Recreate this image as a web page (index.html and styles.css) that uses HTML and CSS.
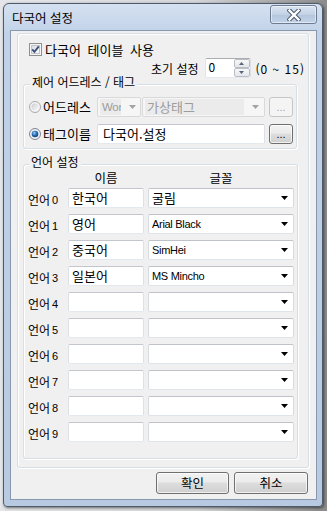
FILE: index.html
```html
<!DOCTYPE html>
<html lang="ko">
<head>
<meta charset="utf-8">
<title>다국어 설정</title>
<link rel="stylesheet" href="styles.css">
</head>
<body>
<div class="window">
  <div class="titlebar">
    <span class="title">다국어 설정</span>
    <div class="close">
      <svg width="14" height="12" viewBox="0 0 14 12"><path d="M2.5 1.5 L11.5 10.5 M11.5 1.5 L2.5 10.5" stroke="#4c5a6d" stroke-width="4.4" stroke-linecap="square" fill="none"/><path d="M2.5 1.5 L11.5 10.5 M11.5 1.5 L2.5 10.5" stroke="#ffffff" stroke-width="2.4" stroke-linecap="square" fill="none"/></svg>
    </div>
  </div>
  <div class="client">
    <div class="panel">
      <div class="check-row">
        <svg class="checkbox" width="13" height="13" viewBox="0 0 13 13">
          <defs><linearGradient id="cbg" x1="0" y1="0" x2="1" y2="1"><stop offset="0" stop-color="#d8dbe0"/><stop offset="1" stop-color="#fbfbfb"/></linearGradient></defs>
          <rect x="0.5" y="0.5" width="12" height="12" fill="#f6f6f6" stroke="#8e8f8f"/>
          <rect x="2.5" y="2.5" width="8" height="8" fill="url(#cbg)" stroke="#c1c5cb"/>
          <path d="M3.2 6.4 L5.4 8.9 L9.8 3.4" stroke="#3d4f78" stroke-width="1.8" fill="none"/>
        </svg>
        <span class="check-label">다국어 테이블 사용</span>
      </div>
      <div class="init-row">
        <span>초기 설정</span>
        <div class="spin">
          <span class="spin-value">0</span>
          <div class="spin-btns">
            <span class="spin-btn"><svg width="5" height="3" viewBox="0 0 5 3"><path d="M0 3h5L2.5 0z" fill="#55657d"/></svg></span>
            <span class="spin-btn"><svg width="5" height="3" viewBox="0 0 5 3"><path d="M0 0h5L2.5 3z" fill="#55657d"/></svg></span>
          </div>
        </div>
        <span class="range">(0 ~ 15)</span>
      </div>
      <fieldset class="group group-addr">
        <legend>제어 어드레스 / 태그</legend>
        <div class="addr-row">
          <svg class="radio" width="12" height="12" viewBox="0 0 12 12">
            <defs><linearGradient id="rg1" x1="0" y1="0" x2="1" y2="1"><stop offset="0" stop-color="#c9cbcf"/><stop offset="1" stop-color="#fbfbfb"/></linearGradient></defs>
            <circle cx="6" cy="6" r="5.5" fill="#f4f4f4" stroke="#a9a9a9"/>
            <circle cx="6" cy="6" r="3.6" fill="url(#rg1)"/>
          </svg>
          <span class="radio-label">어드레스</span>
          <div class="combo disabled combo-type"><span class="combo-text latin">Wor</span><svg width="7" height="4" viewBox="0 0 7 4"><path d="M0 0h7L3.5 4z" fill="#a3a3a3"/></svg></div>
          <div class="combo disabled combo-tag"><span class="combo-text">가상태그</span><svg width="7" height="4" viewBox="0 0 7 4"><path d="M0 0h7L3.5 4z" fill="#a3a3a3"/></svg></div>
          <button class="dots disabled" type="button">...</button>
        </div>
        <div class="addr-row">
          <svg class="radio" width="12" height="12" viewBox="0 0 12 12">
            <defs><radialGradient id="rg2" cx="0.4" cy="0.35" r="0.7"><stop offset="0" stop-color="#9fd0f5"/><stop offset="0.5" stop-color="#2a6fb6"/><stop offset="1" stop-color="#123d73"/></radialGradient></defs>
            <circle cx="6" cy="6" r="5.5" fill="#eef0f3" stroke="#7d8691"/>
            <circle cx="6" cy="6" r="3.3" fill="url(#rg2)"/>
          </svg>
          <span class="radio-label">태그이름</span>
          <div class="textbox tag-input">다국어.설정</div>
          <button class="dots" type="button">...</button>
        </div>
      </fieldset>
      <fieldset class="group group-lang">
        <legend>언어 설정</legend>
        <div class="lang-head"><span></span><span>이름</span><span>글꼴</span></div>
        <div class="lang-grid">
          <span class="lang-label">언어 <span class="num">0</span></span>
          <div class="textbox name">한국어</div>
          <div class="combo font"><span class="combo-text">굴림</span><svg width="7" height="4" viewBox="0 0 7 4"><path d="M0 0h7L3.5 4z" fill="#000"/></svg></div>

          <span class="lang-label">언어 <span class="num">1</span></span>
          <div class="textbox name">영어</div>
          <div class="combo font"><span class="combo-text latin">Arial Black</span><svg width="7" height="4" viewBox="0 0 7 4"><path d="M0 0h7L3.5 4z" fill="#000"/></svg></div>

          <span class="lang-label">언어 <span class="num">2</span></span>
          <div class="textbox name">중국어</div>
          <div class="combo font"><span class="combo-text latin">SimHei</span><svg width="7" height="4" viewBox="0 0 7 4"><path d="M0 0h7L3.5 4z" fill="#000"/></svg></div>

          <span class="lang-label">언어 <span class="num">3</span></span>
          <div class="textbox name">일본어</div>
          <div class="combo font"><span class="combo-text latin">MS Mincho</span><svg width="7" height="4" viewBox="0 0 7 4"><path d="M0 0h7L3.5 4z" fill="#000"/></svg></div>

          <span class="lang-label">언어 <span class="num">4</span></span>
          <div class="textbox name"></div>
          <div class="combo font"><span class="combo-text"></span><svg width="7" height="4" viewBox="0 0 7 4"><path d="M0 0h7L3.5 4z" fill="#000"/></svg></div>

          <span class="lang-label">언어 <span class="num">5</span></span>
          <div class="textbox name"></div>
          <div class="combo font"><span class="combo-text"></span><svg width="7" height="4" viewBox="0 0 7 4"><path d="M0 0h7L3.5 4z" fill="#000"/></svg></div>

          <span class="lang-label">언어 <span class="num">6</span></span>
          <div class="textbox name"></div>
          <div class="combo font"><span class="combo-text"></span><svg width="7" height="4" viewBox="0 0 7 4"><path d="M0 0h7L3.5 4z" fill="#000"/></svg></div>

          <span class="lang-label">언어 <span class="num">7</span></span>
          <div class="textbox name"></div>
          <div class="combo font"><span class="combo-text"></span><svg width="7" height="4" viewBox="0 0 7 4"><path d="M0 0h7L3.5 4z" fill="#000"/></svg></div>

          <span class="lang-label">언어 <span class="num">8</span></span>
          <div class="textbox name"></div>
          <div class="combo font"><span class="combo-text"></span><svg width="7" height="4" viewBox="0 0 7 4"><path d="M0 0h7L3.5 4z" fill="#000"/></svg></div>

          <span class="lang-label">언어 <span class="num">9</span></span>
          <div class="textbox name"></div>
          <div class="combo font"><span class="combo-text"></span><svg width="7" height="4" viewBox="0 0 7 4"><path d="M0 0h7L3.5 4z" fill="#000"/></svg></div>
        </div>
      </fieldset>
    </div>
    <div class="buttons">
      <button class="btn ok" type="button">확인</button>
      <button class="btn cancel" type="button">취소</button>
    </div>
  </div>
</div>
</body>
</html>
```

FILE: styles.css
```css
* { box-sizing: border-box; }
html, body { margin: 0; }
body {
  width: 327px;
  height: 511px;
  overflow: hidden;
  padding: 3px 0 0 3px;
  background: linear-gradient(90deg, #e4e6e9 0, #d4d6d9 60%, #8c8c8c 100%);
  font-family: "Noto Sans CJK KR", "Noto Sans", sans-serif;
  font-size: 12px;
  color: #000;
}

.window {
  width: 320px;
  height: 504px;
  border: 1px solid #4f5b6b;
  border-radius: 6px 6px 4px 4px;
  background: linear-gradient(#d4e1f1, #c1d2e8 30px, #b8cae1);
  padding: 0 5px 6px 6px;
  display: flex;
  flex-direction: column;
  box-shadow: 1px 1px 3px rgba(0, 0, 0, 0.55);
}

.titlebar {
  height: 26px;
  flex: none;
  display: flex;
  justify-content: space-between;
  align-items: flex-start;
}
.title {
  margin: 7px 0 0 2px;
  line-height: 14px;
  font-size: 12.5px;
}
.close {
  width: 47px;
  height: 19px;
  margin-top: 1px;
  border: 1px solid #6c7b90;
  border-radius: 3px;
  background: linear-gradient(#dae5f2, #c3d2e5 50%, #b4c6dc 51%, #c2d3e8);
  box-shadow: inset 0 0 0 1px rgba(255, 255, 255, 0.5);
  display: flex;
  align-items: center;
  justify-content: center;
}

.client {
  flex: none;
  height: 470px;
  background: #f0f0f0;
  border: 1px solid #8797ad;
  display: flex;
  flex-direction: column;
}

.panel {
  margin: 2px 0 0 6px;
  width: 292px;
  height: 435px;
  flex: none;
  border: 1px solid #d5dfe5;
  border-radius: 3px;
  box-shadow: inset 1px 1px 0 #fff, 1px 1px 0 #fff;
}

.check-row {
  margin: 9px 0 0 11px;
  height: 13px;
  display: flex;
  align-items: center;
  gap: 3px;
}
.checkbox { flex: none; display: block; }
.check-label {
  font-size: 13px;
  line-height: 13px;
  word-spacing: 3px;
}

.init-row {
  margin-top: 2px;
  height: 20px;
  display: flex;
  align-items: center;
  justify-content: flex-end;
  padding-right: 3px;
}
.spin {
  margin-left: 6px;
  width: 46px;
  height: 20px;
  display: flex;
  border: 1px solid #abadb3;
  border-color: #abadb3 #dbdfe6 #e3e9ef #e2e3ea;
  border-radius: 2px;
  background: #fff;
}
.spin-value {
  flex: 1;
  padding: 1px 0 0 3px;
  line-height: 14px;
}
.spin-btns {
  width: 16px;
  display: flex;
  flex-direction: column;
}
.spin-btn {
  flex: 1;
  display: flex;
  align-items: center;
  justify-content: center;
  border: 1px solid #b9bec6;
  border-radius: 2px;
  background: linear-gradient(#f8f8f8, #e4e6e9);
}
.spin-btn svg { display: block; }
.range {
  margin-left: 5px;
  letter-spacing: 1px;
}

.group {
  margin: 0 0 0 5px;
  min-width: 0;
  width: 274px;
  border: 1px solid #d5dfe5;
  border-radius: 3px;
  box-shadow: inset 1px 1px 0 #fff, 1px 1px 0 #fff;
}
.group legend {
  margin-left: 1px;
  padding: 0 2px 4px;
  line-height: 14px;
  font-size: 12px;
  background: #f0f0f0;
}
.group-addr {
  margin-top: -3px;
  padding: 4px 3px 4px 5px;
}
.group-lang {
  margin-top: 6px;
  width: 275px;
  padding: 0 3px 16px 4px;
}

.addr-row {
  height: 20px;
  display: flex;
  align-items: center;
}
.addr-row + .addr-row { margin-top: 7px; }
.radio { flex: none; display: block; }
.radio-label {
  width: 56px;
  flex: none;
  padding-left: 2px;
  font-size: 13px;
  line-height: 16px;
}

.combo {
  height: 20px;
  display: flex;
  align-items: center;
  background: #fff;
  border: 1px solid #abadb3;
  border-color: #bfc3c9 #d6dbe1 #dfe4ea #d6dbe1;
  border-radius: 2px;
  padding: 0 5px 0 2px;
}
.combo svg { flex: none; display: block; }
.combo-text {
  flex: 1;
  min-width: 0;
  white-space: nowrap;
  line-height: 18px;
  padding-left: 1px;
  font-size: 13px;
}
.latin {
  font-family: "Liberation Sans", Arial, sans-serif;
  font-size: 11px;
  letter-spacing: -0.3px;
}
.combo.disabled {
  background: #f6f6f6;
  border-color: #d9d9d9;
  color: #9c9c9c;
}
.combo.disabled .combo-text {
  background: #ebebeb;
  margin-right: 8px;
  height: 16px;
  line-height: 16px;
  padding-left: 2px;
}
.combo-type { width: 44px; margin-right: 1px; padding-right: 4px; }
.combo-type .combo-text { margin-right: 5px; font-size: 11.5px; overflow: hidden; }
.combo-tag { width: 123px; }

.dots {
  margin-left: 4px;
  width: 24px;
  height: 20px;
  padding: 0 0 4px;
  font-family: "Liberation Sans", sans-serif;
  font-size: 11px;
  line-height: 10px;
  color: #000;
  border: 1px solid #707070;
  border-radius: 3px;
  background: linear-gradient(#f3f3f3, #ebebeb 45%, #dddddd 50%, #cfcfcf);
  box-shadow: inset 0 0 0 1px rgba(255, 255, 255, 0.7);
  display: flex;
  align-items: flex-end;
  justify-content: center;
}
.dots.disabled {
  border-color: #c4c7ca;
  background: #f4f4f4;
  color: #a6a6a6;
  box-shadow: none;
}

.textbox {
  height: 20px;
  background: #fff;
  border: 1px solid #abadb3;
  border-color: #c3c6cc #dde1e6 #e3e9ef #dde1e6;
  border-radius: 2px;
  padding: 0 3px;
  line-height: 17px;
  font-size: 13px;
  white-space: nowrap;
}
.tag-input {
  width: 168px;
  padding-left: 5px;
  line-height: 18px;
}

.lang-head {
  display: grid;
  grid-template-columns: 36px 76px 146px;
  column-gap: 4px;
  text-align: center;
  line-height: 12px;
  font-size: 12.5px;
  margin: -1px 0 4px;
}
.lang-grid {
  display: grid;
  grid-template-columns: 36px 76px 146px;
  grid-auto-rows: 20px;
  column-gap: 4px;
  row-gap: 6px;
}
.lang-label {
  display: flex;
  align-items: center;
  padding-top: 2px;
  font-size: 12px;
  white-space: nowrap;
}
.num {
  margin-left: 2px;
  font-family: "Liberation Sans", sans-serif;
  font-size: 11px;
  padding-top: 1px;
}

.buttons {
  display: flex;
  justify-content: flex-end;
  gap: 5px;
  margin-top: 4px;
  padding-right: 8px;
}
.btn {
  height: 22px;
  padding: 0;
  font-family: "Noto Sans CJK KR", sans-serif;
  font-size: 12.5px;
  line-height: 14px;
  color: #000;
  border: 1px solid #707070;
  border-radius: 3px;
  background: linear-gradient(#f2f2f2, #ebebeb 45%, #dddddd 50%, #cfcfcf);
  box-shadow: inset 0 0 0 1px rgba(255, 255, 255, 0.7);
}
.ok { width: 73px; }
.cancel { width: 74px; }
```
